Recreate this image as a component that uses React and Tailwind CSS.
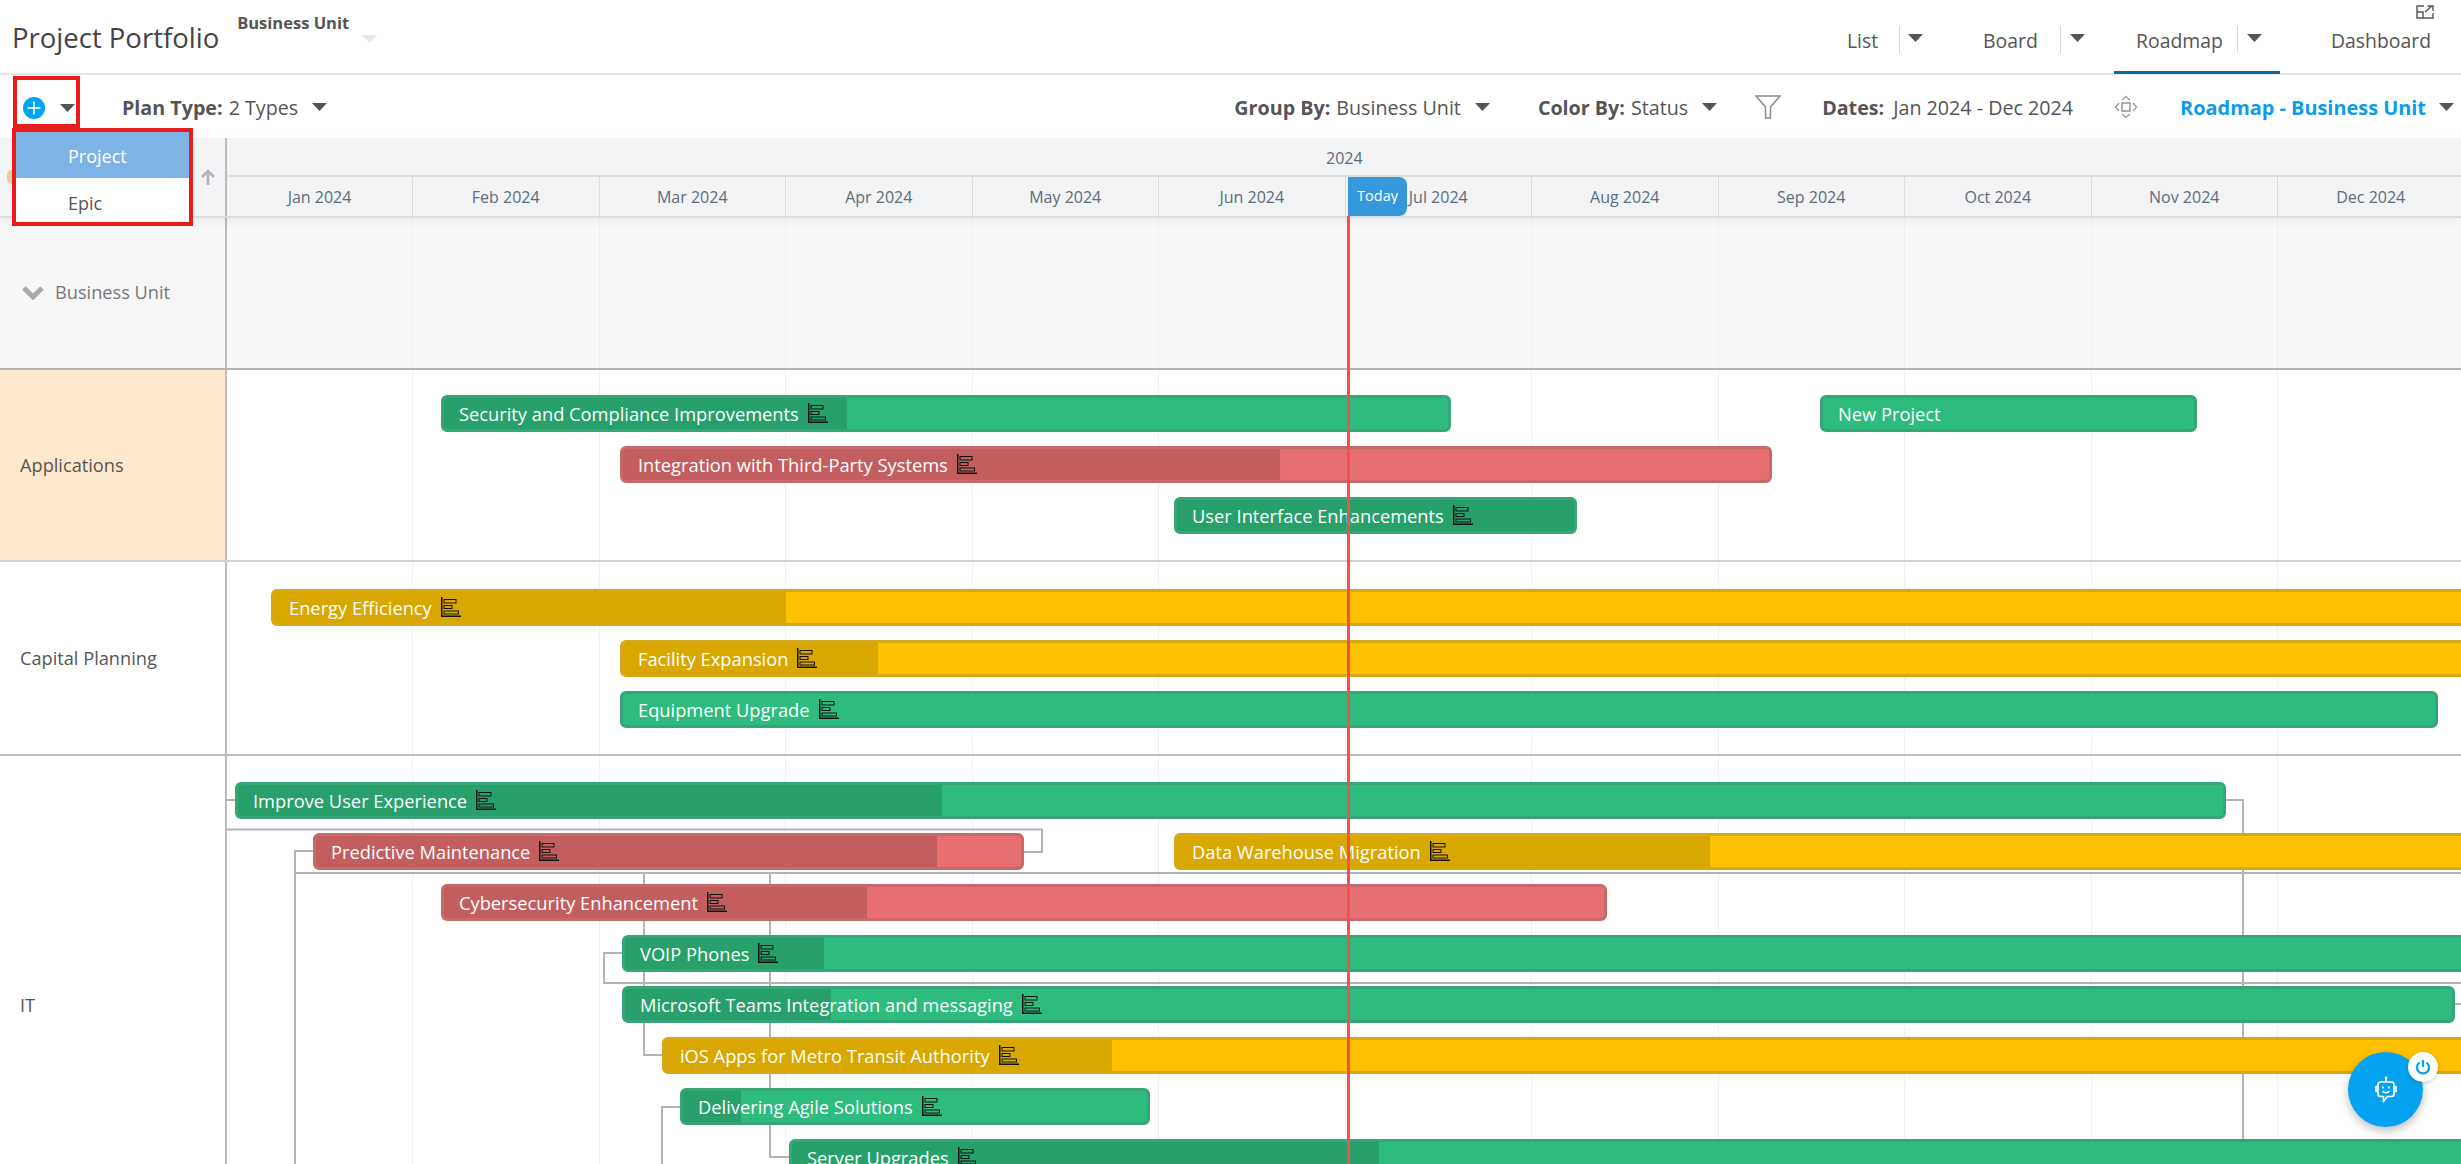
const months = ["Jan 2024", "Feb 2024", "Mar 2024", "Apr 2024", "May 2024", "Jun 2024", "Jul 2024", "Aug 2024", "Sep 2024", "Oct 2024", "Nov 2024", "Dec 2024"];

const palette = {
    green: { bar: "bg-[#2dbc7d] border-[#36a577]", done: "bg-[#27a06c]" },
    red: { bar: "bg-[#e76f6f] border-[#c7696a]", done: "bg-[#c35e5e]" },
    yellow: { bar: "bg-[#fec200] border-[#d4a817]", done: "bg-[#d9a800]" },
};

// x and end are page pixels, lanes start at 227
const appBars = [
    { name: "Security and Compliance Improvements", color: "green", x: 441, end: 1451, done: 847, top: 25 },
    { name: "New Project", color: "green", x: 1820, end: 2197, top: 25, noIcon: true },
    { name: "Integration with Third-Party Systems", color: "red", x: 620, end: 1772, done: 1280, top: 76 },
    { name: "User Interface Enhancements", color: "green", x: 1174, end: 1577, done: 1577, top: 127 },
];

const capitalBars = [
    { name: "Energy Efficiency", color: "yellow", x: 271, end: 2600, done: 786, top: 27 },
    { name: "Facility Expansion", color: "yellow", x: 620, end: 2600, done: 878, top: 78 },
    { name: "Equipment Upgrade", color: "green", x: 620, end: 2438, top: 129 },
];

const itBars = [
    { name: "Improve User Experience", color: "green", x: 235, end: 2226, done: 942, top: 26 },
    { name: "Predictive Maintenance", color: "red", x: 313, end: 1024, done: 937, top: 77 },
    { name: "Data Warehouse Migration", color: "yellow", x: 1174, end: 2600, done: 1710, top: 77 },
    { name: "Cybersecurity Enhancement", color: "red", x: 441, end: 1607, done: 867, top: 128 },
    { name: "VOIP Phones", color: "green", x: 622, end: 2600, done: 824, top: 179 },
    { name: "Microsoft Teams Integration and messaging", color: "green", x: 622, end: 2455, done: 831, top: 230 },
    { name: "iOS Apps for Metro Transit Authority", color: "yellow", x: 662, end: 2600, done: 1112, top: 281 },
    { name: "Delivering Agile Solutions", color: "green", x: 680, end: 1150, done: 741, top: 332 },
    { name: "Server Upgrades", color: "green", x: 789, end: 2600, done: 1379, top: 383 },
];

function Caret({ className = "text-[#555]" }) {
    return (
        <svg width="15" height="8" viewBox="0 0 15 8" className={className}>
            <polygon points="0,0 15,0 7.5,8" fill="currentColor" />
        </svg>
    );
}

function GanttIcon() {
    return (
        <svg width="20" height="20" viewBox="0 0 20 20" fill="none" stroke="#111" strokeWidth="1" className="shrink-0 ml-[9px] -mt-[2px]">
            <path d="M0.75 0V19.25H20" strokeWidth="1.5" />
            <rect x="3" y="2.5" width="12" height="3.5" />
            <rect x="3" y="8.5" width="8" height="3" />
            <rect x="3" y="14" width="14.5" height="3" />
        </svg>
    );
}

function Bar({ bar }) {
    const colors = palette[bar.color];
    return (
        <div
            className={`absolute h-[37px] box-border border-[3px] rounded-[6px] overflow-hidden ${colors.bar}`}
            style={{ left: bar.x - 227, width: bar.end - bar.x, top: bar.top }}
        >
            {bar.done && (
                <div className={`absolute left-0 top-0 bottom-0 ${colors.done}`} style={{ width: bar.done - bar.x - 3 }} />
            )}
            <div className="relative h-full flex items-center pl-[15px] text-white text-[18.3px] leading-none whitespace-nowrap">
                <span className="mt-[2px]">{bar.name}</span>
                {!bar.noIcon && <GanttIcon />}
            </div>
        </div>
    );
}

function GridLines() {
    return (
        <div className="absolute inset-0 flex">
            {months.map((m) => (
                <div key={m} className="w-[186.5px] first:w-[186px] shrink-0 h-full border-r border-[#f0f0f0]" />
            ))}
        </div>
    );
}

function Lane({ label, height, bars, labelClass = "bg-white", lineClass = "border-[#bdbdbd]", children }) {
    return (
        <div className={`flex border-b-2 box-border ${lineClass}`} style={{ height }}>
            <div className={`w-[227px] shrink-0 border-r-2 border-[#bdbdbd] flex items-center pl-[20px] pt-[2px] text-[#555] text-[18.2px] ${labelClass}`}>
                {label}
            </div>
            <div className="relative flex-1">
                <GridLines />
                {children}
                {bars.map((b) => (
                    <Bar key={b.name} bar={b} />
                ))}
            </div>
        </div>
    );
}

function Tab({ label, width, sepClass, caretClass, active }) {
    return (
        <div className={`relative h-[71px] flex items-center pt-[11px] ${width}`}>
            <span className="text-[#555] text-[19.4px]">{label}</span>
            {sepClass && <div className={`absolute top-[26px] h-[27px] border-l border-[#d8d8d8] ${sepClass}`} />}
            {caretClass && <div className={`absolute top-[34px] ${caretClass}`}><Caret /></div>}
            {active && <div className="absolute -left-[22px] w-[166px] top-[71px] h-[3px] bg-[#0a6aa6]" />}
        </div>
    );
}

function Filter({ label, value, gap = "ml-[14px]" }) {
    return (
        <div className="flex items-center text-[19.7px] text-[#555]">
            <span className="font-bold mr-[6px]">{label}</span>
            <span>{value}</span>
            <span className={gap}><Caret /></span>
        </div>
    );
}

export default function App() {
    return (
        <div className="relative w-[2461px] h-[1164px] overflow-hidden bg-white font-['Open_Sans',sans-serif]">
            {/* title bar */}
            <header className="h-[75px] border-b-2 border-[#e6e6e6] flex box-border pl-[12px]">
                <h1 className="text-[#444] text-[27.5px] font-normal leading-none mt-[24px]">Project Portfolio</h1>
                <div className="ml-[18px] relative">
                    <div className="text-[#555] text-[16.5px] font-bold mt-[11px]">Business Unit</div>
                    <div className="absolute left-[125px] top-[35px]"><Caret className="text-[#e6e6e6]" /></div>
                </div>
                <nav className="ml-auto flex relative">
                    <Tab label="List" width="w-[136px]" sepClass="left-[52px]" caretClass="left-[61px]" />
                    <Tab label="Board" width="w-[153px]" sepClass="left-[77px]" caretClass="left-[87px]" />
                    <Tab label="Roadmap" width="w-[195px]" sepClass="left-[101px]" caretClass="left-[111px]" active />
                    <Tab label="Dashboard" width="w-[130px]" />
                    <svg width="18" height="14" viewBox="0 0 18 14" fill="none" stroke="#555" strokeWidth="1.4" className="absolute right-[27px] top-[5px]">
                        <path d="M8 1H1V13H17V8" />
                        <path d="M1 7H7V13" />
                        <path d="M9 7L16 1M11.5 1H17V6" />
                    </svg>
                </nav>
            </header>

            {/* toolbar */}
            <div className="h-[63px] flex items-center pt-[2px]">
                <div className="flex items-center ml-[23px]">
                    <svg width="22" height="22" viewBox="0 0 22 22">
                        <circle cx="11" cy="11" r="11" fill="#03a4f0" />
                        <path d="M11 4.5V17.5M4.5 11H17.5" stroke="#fff" strokeWidth="1.5" />
                    </svg>
                    <span className="ml-[15px]"><Caret /></span>
                </div>
                <div className="ml-[47px]"><Filter label="Plan Type:" value="2 Types" /></div>
                <div className="ml-auto flex items-center">
                    <Filter label="Group By:" value="Business Unit" />
                    <div className="ml-[48px]"><Filter label="Color By:" value="Status" /></div>
                    <svg width="26" height="24" viewBox="0 0 26 24" fill="none" stroke="#8c8c8c" strokeWidth="1.5" className="ml-[38px]">
                        <path d="M1 1H25L15.5 12V23H10.5V12Z" />
                    </svg>
                    <div className="ml-[41px] flex items-center text-[19.7px] text-[#555]">
                        <span className="font-bold mr-[9px]">Dates:</span>
                        <span>Jan 2024 - Dec 2024</span>
                    </div>
                    <svg width="24" height="24" viewBox="0 0 24 24" fill="none" stroke="#999" strokeWidth="1.3" className="ml-[41px]">
                        <path d="M8 5L12 1.5L16 5M8 19L12 22.5L16 19M5 8L1.5 12L5 16M19 8L22.5 12L19 16" />
                        <rect x="8" y="8" width="8" height="8" strokeWidth="1.6" />
                    </svg>
                    <span className="ml-[42px] text-[19.9px] font-bold text-[#0d9ceb]">Roadmap - Business Unit</span>
                    <span className="ml-[13px] mr-[7px]"><Caret /></span>
                </div>
            </div>

            {/* timeline head */}
            <div className="flex h-[80px] bg-[#f2f3f5] border-b-2 border-[#dcdcdc] box-border relative z-10 shadow-[0_3px_8px_rgba(0,0,0,0.06)]">
                <div className="w-[227px] shrink-0 border-r-2 border-[#bdbdbd] relative">
                    <svg width="14" height="16" viewBox="0 0 14 16" fill="none" stroke="#b4b4b8" strokeWidth="2.6" className="absolute left-[201px] top-[31px]">
                        <path d="M7 16V2M1 8L7 2L13 8" />
                    </svg>
                    <div className="absolute left-[7px] top-[32px] w-[10px] h-[14px] rounded-full bg-[#eccb9b]" />
                </div>
                <div className="flex-1 flex flex-col">
                    <div className="h-[39px] border-b-2 border-[#dcdcdc] box-border flex items-center pt-[2px] text-[#5f6b7a] text-[16px]">
                        <span className="ml-[1099px]">2024</span>
                    </div>
                    <div className="flex-1 flex">
                        {months.map((m) => (
                            <div key={m} className="w-[186.5px] first:w-[186px] shrink-0 border-r border-[#dcdcdc] flex items-center justify-center text-[#5f6b7a] text-[16px]">
                                {m}
                            </div>
                        ))}
                    </div>
                </div>
            </div>

            {/* swimlanes */}
            <div className="flex h-[152px] border-b-2 border-[#b5b5b5] box-border">
                <div className="w-[227px] shrink-0 border-r-2 border-[#bdbdbd] bg-[#f7f7f7] flex items-center pl-[22px] text-[#777] text-[18.2px]">
                    <svg width="22" height="14" viewBox="0 0 22 14" fill="none" stroke="#aaa" strokeWidth="5">
                        <path d="M2 2L11 11L20 2" />
                    </svg>
                    <span className="ml-[11px]">Business Unit</span>
                </div>
                <div className="relative flex-1 bg-[#f8f8f8]">
                    <GridLines />
                </div>
            </div>
            <Lane label="Applications" height={192} bars={appBars} labelClass="bg-[#ffe9cc]" lineClass="border-[#d2d2d2]" />
            <Lane label="Capital Planning" height={194} bars={capitalBars} />
            <Lane label="IT" height={500} bars={itBars}>
                <svg viewBox="227 756 2234 500" className="absolute left-0 top-0 w-[2234px] h-[500px]" fill="none" stroke="#b4b4b4" strokeWidth="2">
                    <path d="M227 800H235" />
                    <path d="M227 829.5H1042V852H1023" />
                    <path d="M313 851H295V1256" />
                    <path d="M295 873H2461" />
                    <path d="M644 873V1055H662" />
                    <path d="M770 873V1157H789" />
                    <path d="M622 953H604V983H2461" />
                    <path d="M680 1107H662V1256" />
                    <path d="M2226 800H2243V1256" />
                    <path d="M2455 1004H2461" />
                </svg>
            </Lane>

            {/* today marker */}
            <div className="absolute z-20 left-[1347px] top-[216px] bottom-0 w-[3px] bg-[#f25050]" />
            <div className="absolute z-20 left-[1348px] top-[177px] w-[59px] h-[39px] bg-[#3498db] rounded-r-[8px] flex justify-center pt-[8px]">
                <span className="text-white text-[14.5px] leading-[21px] h-[19px] overflow-hidden">Today</span>
            </div>

            {/* add menu, red callouts from the screenshot */}
            <div className="absolute z-30 left-[13px] top-[76px] w-[67px] h-[52px] border-[4px] border-[#e81c1c]" />
            <div className="absolute z-30 left-[12px] top-[128px] w-[181px] h-[98px] border-[4px] border-[#e81c1c] bg-white text-[18px]">
                <div className="h-[46px] bg-[#7db3e5] text-white flex items-center pl-[52px] pt-[2px]">Project</div>
                <div className="h-[44px] text-[#555] flex items-center pl-[52px] pt-[6px]">Epic</div>
            </div>

            {/* assistant button */}
            <div className="absolute z-30 left-[2348px] top-[1052px] w-[75px] h-[75px] rounded-full bg-[#03a3f2] shadow-[0_4px_10px_rgba(0,0,0,0.25)] flex items-center justify-center">
                <svg width="24" height="27" viewBox="0 0 24 27" fill="none" stroke="#fff" strokeWidth="1.7" strokeLinejoin="round">
                    <circle cx="12" cy="1.8" r="1.3" fill="#fff" stroke="none" />
                    <path d="M12 2V6" />
                    <path d="M6.5 6H17.5A2.5 2.5 0 0 1 20 8.500V18A2.500 2.500 0 0 1 17.500 20.500H13.500L9.500 25.500V20.500H6.500A2.500 2.500 0 0 1 4 18V8.500A2.500 2.500 0 0 1 6.500 6Z" />
                    <path d="M4 10.500H2V15.500H4M20 10.500H22V15.500H20" />
                    <path d="M9 10.500V12.500M15 10.500V12.500" />
                    <path d="M8.500 15.200C10.500 17 13.500 17 15.500 15.200" />
                </svg>
            </div>
            <div className="absolute z-30 left-[2408px] top-[1052px] w-[30px] h-[30px] rounded-full bg-white shadow-[0_1px_4px_rgba(0,0,0,0.2)] flex items-center justify-center">
                <svg width="16" height="16" viewBox="0 0 16 16" fill="none" stroke="#03a3f2" strokeWidth="2.2">
                    <path d="M8 1V8" />
                    <path d="M4.400 3.600A6 6 0 1 0 11.600 3.600" />
                </svg>
            </div>
        </div>
    );
}
